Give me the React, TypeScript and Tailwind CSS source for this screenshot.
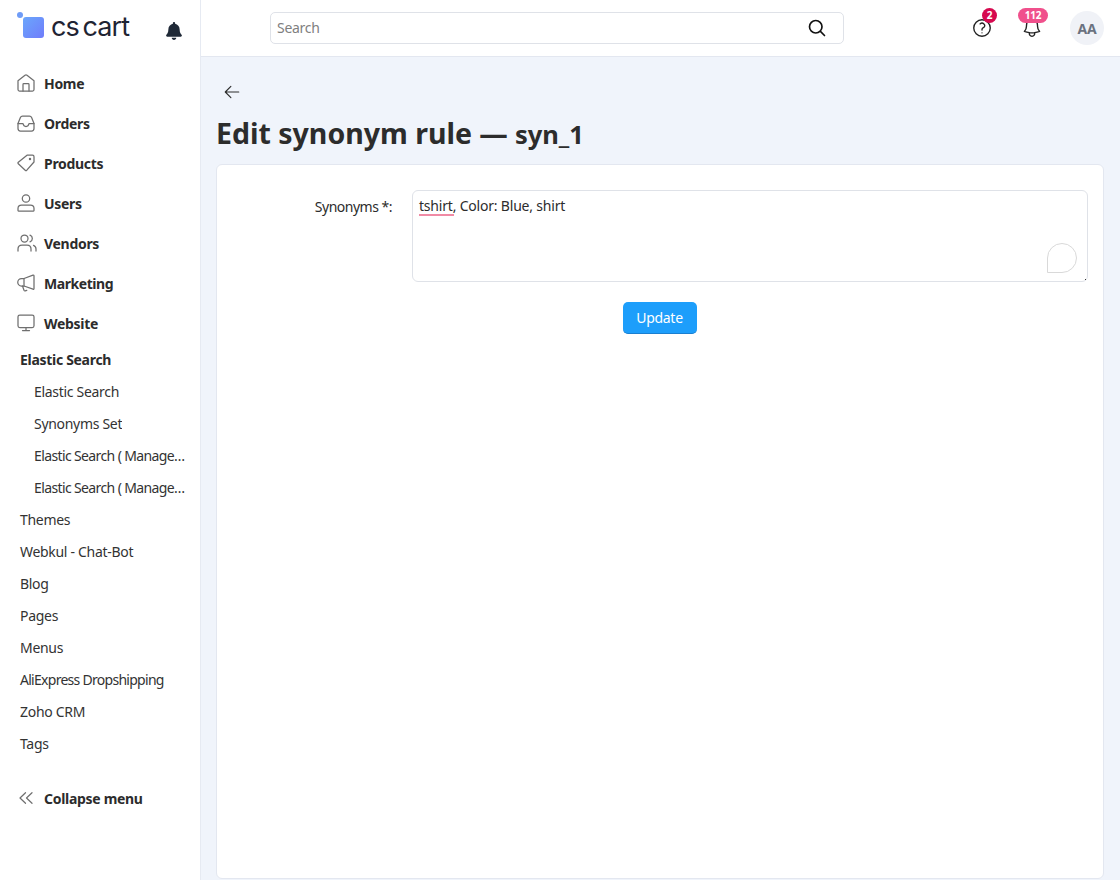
import { FaBell } from "react-icons/fa";
import {
  HiOutlineArrowLeft,
  HiOutlineBell,
  HiOutlineMagnifyingGlass,
  HiOutlineQuestionMarkCircle,
} from "react-icons/hi2";

const iconProps = {
  fill: "none",
  stroke: "#6f6f6f",
  strokeWidth: 1.25,
  strokeLinecap: "round" as const,
  strokeLinejoin: "round" as const,
};

function HomeIcon() {
  return (
    <svg width="18" height="18" viewBox="0 0 18 18" {...iconProps}>
      <path d="M1 6.800 8 1.300q1-.7 2 0l7 5.500V15.500q0 1.500-1.500 1.500h-13Q1 17 1 15.500Z" />
      <path d="M6 17V10.500q0-.8.8-.8h4.400q.8 0 .8.8V17" />
    </svg>
  );
}

function InboxIcon() {
  return (
    <svg width="18" height="18" viewBox="0 0 18 18" {...iconProps}>
      <path d="M1 9.500 3.400 3.400Q4 2 5.500 2h7q1.500 0 2.100 1.400L17 9.500V14.500Q17 17 14.500 17h-11Q1 17 1 14.500Z" />
      <path d="M1 9.500H6Q6.500 12.500 9 12.500T12 9.500H17" />
    </svg>
  );
}

function TagIcon() {
  return (
    <svg width="18" height="18" viewBox="0 0 18 18" {...iconProps}>
      <path d="M10 1.200H15.500Q17 1.200 17 2.700V8L9.800 16.200Q9 17 8.200 16.200L1.300 9.800Q.6 9 1.300 8.300Z" />
      <circle cx="13" cy="5" r=".6" />
    </svg>
  );
}

function UserIcon() {
  return (
    <svg width="18" height="18" viewBox="0 0 18 18" {...iconProps}>
      <circle cx="9" cy="4.500" r="3.700" />
      <path d="M1 16.500V14.500Q1 11 4.500 11h9Q17 11 17 14.500V16.500Q17 17 16.500 17h-15Q1 17 1 16.500Z" />
    </svg>
  );
}

function UsersIcon() {
  return (
    <svg width="20" height="18" viewBox="0 0 20 18" {...iconProps}>
      <circle cx="7.500" cy="4.500" r="3.500" />
      <path d="M1 17V15Q1 11 5 11h5q4 0 4 4v2" />
      <path d="M13 1.200a3.500 3.500 0 0 1 0 6.600" />
      <path d="M16.500 11.300Q19 12.300 19 15v2" />
    </svg>
  );
}

function MegaphoneIcon() {
  return (
    <svg width="18" height="18" viewBox="0 0 18 18" {...iconProps}>
      <path d="M17 2V14.500Q17 15.500 16 15.200L7 12H4.500a3.700 3.700 0 0 1 0-7.500H7L16 1.200Q17 1 17 2Z" />
      <path d="M7 4.500V12M5.500 12 7 16.200Q7.400 17 8.200 16.800L9.800 16.300" />
    </svg>
  );
}

function MonitorIcon() {
  return (
    <svg width="18" height="18" viewBox="0 0 18 18" {...iconProps}>
      <rect x="1" y="1" width="16" height="12.500" rx="1.800" />
      <path d="M9 13.500V16.500M5.500 16.500H12.500" />
    </svg>
  );
}

const mainNav = [
  { label: "Home", icon: HomeIcon },
  { label: "Orders", icon: InboxIcon },
  { label: "Products", icon: TagIcon },
  { label: "Users", icon: UserIcon },
  { label: "Vendors", icon: UsersIcon },
  { label: "Marketing", icon: MegaphoneIcon },
  { label: "Website", icon: MonitorIcon },
];

const elasticLinks = ["Elastic Search", "Synonyms Set", "Elastic Search ( Manage Indices )", "Elastic Search ( Manage Fields )"];
const websiteLinks = ["Themes", "Webkul - Chat-Bot", "Blog", "Pages", "Menus", "AliExpress Dropshipping", "Zoho CRM", "Tags"];

function Sidebar() {
  return (
    <aside className="w-[201px] shrink-0 h-[880px] bg-white border-r border-[#e6eaf2] flex flex-col">
      <div className="h-[56px] flex items-center pl-[17px] pr-[16px]">
        <div className="relative w-[27px] h-[26px] mt-[-7px]">
          <span className="absolute left-0 top-0 w-[6px] h-[6px] rounded-full bg-[#6f9cf7]" />
          <span className="absolute left-[6px] top-[5px] w-[21px] h-[21px] rounded-[3px] bg-gradient-to-br from-[#6aa6fb] to-[#6f7cfb]" />
        </div>
        <span className="ml-[7px] mt-[-3px] text-[27px] leading-none tracking-[-0.9px] [word-spacing:-3px] text-[#1f2433] font-['Inter',sans-serif]">cs cart</span>
        <FaBell className="ml-auto mt-[5px] mr-[1px] text-[#1f2937]" size={18} />
      </div>
      <nav className="pt-[7px]">
        {mainNav.map((item) => (
          <a key={item.label} className="flex items-center h-[40px] pl-[17px] text-[14px] font-bold text-[#2c2c2c]">
            <span className="w-[27px] shrink-0 flex items-center">
              <item.icon />
            </span>
            <span className={item.label === "Marketing" ? "tracking-[-0.45px]" : ""}>{item.label}</span>
          </a>
        ))}
      </nav>
      <div className="pl-[20px] pr-[12px] text-[14px] text-[#333]">
        <div className="h-[32px] flex items-center font-bold text-[#2c2c2c]">Elastic Search</div>
        {elasticLinks.map((label) => (
          <div key={label} className="h-[32px] flex items-center pl-[14px]">
            <span className={label.includes("Manage") ? "truncate tracking-[-0.62px]" : "truncate"}>{label}</span>
          </div>
        ))}
        {websiteLinks.map((label) => (
          <div key={label} className={label === "AliExpress Dropshipping" ? "h-[32px] flex items-center tracking-[-0.72px]" : "h-[32px] flex items-center"}>{label}</div>
        ))}
      </div>
      <a className="flex items-center mt-[27px] h-[24px] pl-[19px] text-[14px] font-bold text-[#2c2c2c]">
        <svg width="14" height="12" viewBox="0 0 14 12" fill="none" stroke="#6f6f6f" strokeWidth="1.2" strokeLinecap="round" strokeLinejoin="round" className="mr-[11px]">
          <path d="M6.500 .7 1 6l5.500 5.300M13 .7 7.500 6l5.500 5.300" />
        </svg>
        Collapse menu
      </a>
    </aside>
  );
}

function Header() {
  return (
    <header className="h-[57px] shrink-0 bg-white border-b border-[#e3e7f0] flex items-center pl-[69px] pr-[16px]">
      <div className="w-[574px] h-[32px] border border-[#dfe2e8] rounded-[5px] flex items-center pl-[6px] pr-[16px]">
        <span className="text-[14px] text-[#808080] mt-[-2px]">Search</span>
        <HiOutlineMagnifyingGlass className="ml-auto text-[#111] w-[20px] h-[20px]" strokeWidth={2} />
      </div>
      <div className="relative ml-[127px] w-[22px] h-[22px]">
        <HiOutlineQuestionMarkCircle className="w-[22px] h-[22px] text-[#222]" />
        <span className="absolute left-[11px] top-[-9px] w-[15px] h-[15px] rounded-full bg-[#d6094f] text-white text-[10px] font-bold flex items-center justify-center">2</span>
      </div>
      <div className="relative ml-[28px] w-[22px] h-[22px]">
        <HiOutlineBell className="w-[22px] h-[22px] text-[#222]" />
        <span className="absolute left-[-3px] top-[-9px] w-[30px] h-[15px] rounded-full bg-[#f0508c] text-white text-[10px] font-bold flex items-center justify-center">112</span>
      </div>
      <div className="ml-[27px] w-[34px] h-[34px] rounded-full bg-[#f0f2f7] text-[#6b7280] text-[14px] font-bold flex items-center justify-center">AA</div>
    </header>
  );
}

export default function App() {
  return (
    <div className="flex w-[1120px] h-[880px] overflow-hidden bg-[#f0f4fb] tracking-[-0.3px] font-['Noto_Sans',sans-serif]">
      <Sidebar />
      <div className="flex-1 flex flex-col min-w-0">
        <Header />
        <main className="flex-1 flex flex-col px-[16px] min-h-0">
          <div className="h-[35px] mt-[17px] flex items-center pl-[6px]">
            <HiOutlineArrowLeft className="w-[18px] h-[18px] text-[#2c2c2c]" />
          </div>
          <h1 className="h-[48px] ml-[-1px] flex items-center gap-[7px] font-bold text-[28.500px] tracking-normal text-[#2c2c2c] whitespace-nowrap">
            Edit synonym rule — <span className="text-[25.500px] mt-[2px]">syn_1</span>
          </h1>
          <section className="mt-[7px] mb-[1px] ml-[-1px] flex-1 bg-white border border-[#e3e7f0] rounded-[6px] pl-[16px] pr-[15px] pt-[25px]">
            <div className="flex items-start">
              <label className="w-[179px] pr-[20px] pt-[6px] text-right text-[14px] tracking-[-0.5px] text-[#2c2c2c]">Synonyms *:</label>
              <div className="relative flex-1">
                <textarea
                  readOnly
                  spellCheck={false}
                  defaultValue="tshirt, Color: Blue, shirt"
                  className="block w-full h-[92px] resize-none border border-[#dfe2e8] rounded-[6px] px-[6px] py-[5px] text-[14px] tracking-[-0.2px] leading-[20px] text-[#2c2c2c] outline-none"
                />
                <span className="absolute left-[7px] top-[24px] w-[35px] h-[2px] bg-[#f08aa5]" />
                <span className="absolute right-[11px] bottom-[9px] w-[30px] h-[30px] border border-[#d9d9d9] rounded-full rounded-bl-none" />
                <span className="absolute right-[2px] bottom-[2px] w-[1px] h-[1px] bg-[#333]" />
              </div>
            </div>
            <div className="flex justify-center mt-[20px] pr-[2px]">
              <button className="w-[74px] h-[32px] rounded-[5px] bg-[#1d9efb] text-white text-[14px] border-b border-[#1a7fd0]">Update</button>
            </div>
          </section>
        </main>
      </div>
    </div>
  );
}
